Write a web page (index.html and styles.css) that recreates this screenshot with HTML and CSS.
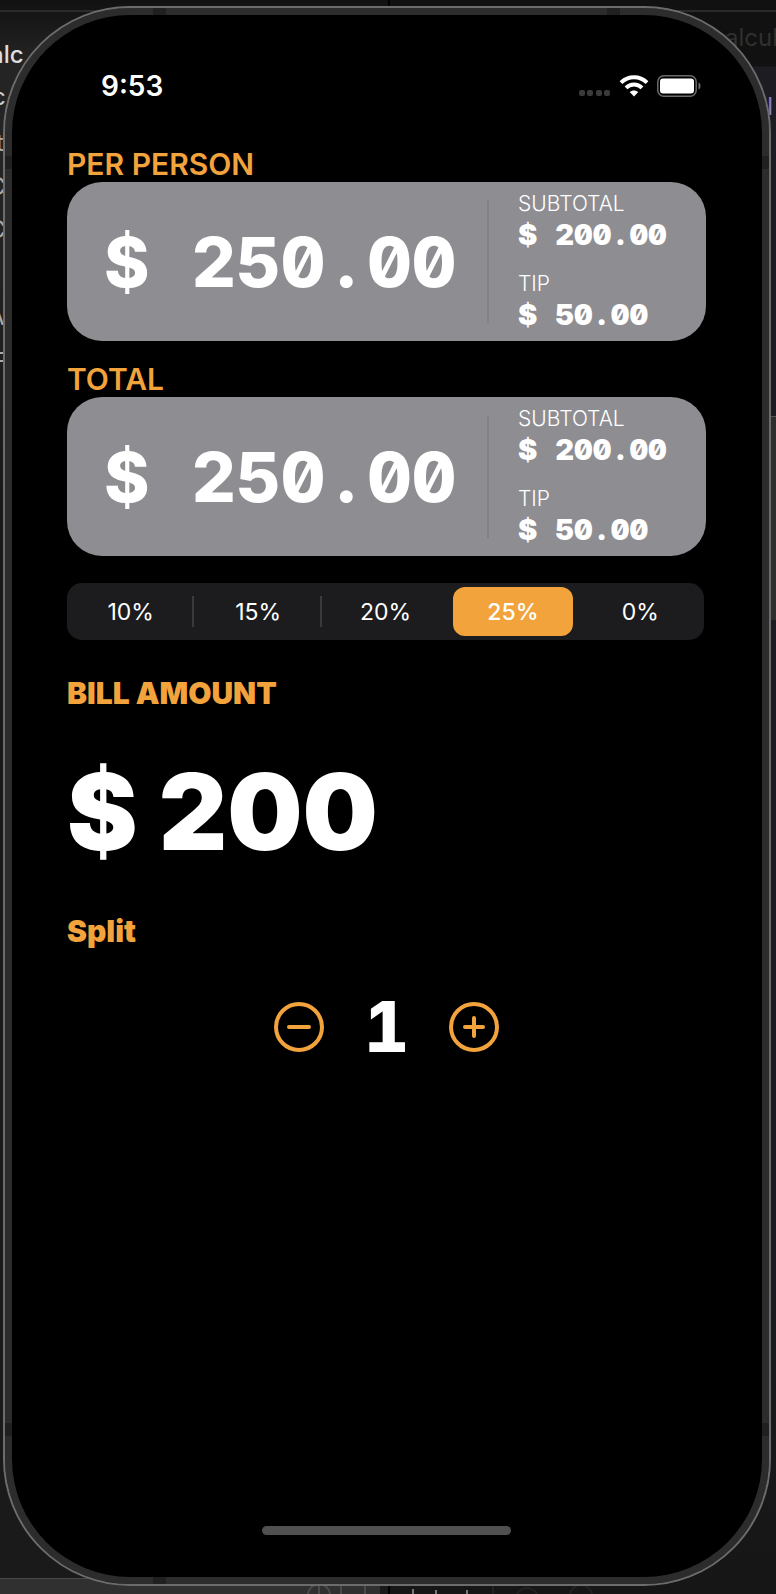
FILE: index.html
```html
<!DOCTYPE html>
<html lang="en">
<head>
<meta charset="utf-8">
<meta name="viewport" content="width=device-width, initial-scale=1">
<title>Tip Calculator</title>
<link rel="stylesheet" href="styles.css">
</head>
<body>
<div class="desktop" aria-hidden="true">
  <div class="pane pane-left"></div>
  <div class="pane pane-right"></div>
  <div class="pane pane-footer"></div>
  <div class="line line-top"></div>
  <div class="pane pane-side"></div>
  <span class="peek peek-title">alc</span>
  <span class="peek peek-tab">alcul</span>
  <span class="peek peek-a">c</span>
  <span class="peek peek-b">t</span>
  <span class="peek peek-c">C</span>
  <span class="peek peek-d">C</span>
  <span class="peek peek-e">A</span>
  <span class="peek peek-f">F</span>
  <span class="peek peek-code">l</span>
  <svg class="tools" viewBox="0 0 300 12" width="300" height="12" fill="none" stroke="#4a4a4a" stroke-width="2">
    <circle cx="19" cy="13" r="11"/><path d="M19 4v8M41 12V3h24v9"/>
    <path stroke="#000" d="M89 0v12"/><path stroke="#777" d="M113 7v5M136 8v4M167 8v4"/>
    <path stroke="#222" d="M193 3v9"/><circle stroke="#222" cx="227" cy="17" r="11"/><circle stroke="#222" cx="281" cy="14" r="11"/>
  </svg>
</div>
<div class="phone">
  <i class="band band-tl"></i><i class="band band-tr"></i><i class="band band-bl"></i>
  <i class="band side-tl"></i><i class="band side-tr"></i><i class="band side-bl"></i><i class="band side-br"></i>
  <header class="status">
    <time class="clock">9:53</time>
    <div class="indicators">
      <svg class="cell" width="32" height="22" viewBox="0 0 32 22" fill="#3a3a3a" aria-label="No signal">
        <rect x="0" y="15" width="6" height="6" rx="2"/><rect x="8" y="15" width="6" height="6" rx="2"/><rect x="17" y="15" width="6" height="6" rx="2"/><rect x="25" y="15" width="6" height="6" rx="2"/>
      </svg>
      <svg class="wifi" width="30" height="22" viewBox="0 0 30 22" fill="none" stroke="#fff" stroke-width="4" aria-label="Wi-Fi">
        <path d="M2 7.6C9.300 .4 20.700 .4 28 7.600"/><path d="M7 12.900C11.500 8.500 18.500 8.500 23 12.900"/>
        <path fill="#fff" stroke="none" d="M15 21.400l-4.300-4.300c2.400-2.300 6.200-2.300 8.600 0z"/>
      </svg>
      <svg class="battery" width="45" height="22" viewBox="0 0 45 22" fill="none" aria-label="Battery full">
        <rect x=".8" y=".8" width="38.400" height="20.400" rx="6" stroke="#6b6b6b" stroke-width="1.500"/>
        <rect x="3" y="3.500" width="34" height="15" rx="3" fill="#fff"/><path d="M41.500 7.500c2.700.6 2.700 6.400 0 7z" fill="#6b6b6b"/>
      </svg>
    </div>
  </header>
  <main class="calc">
    <section class="summary">
      <h2 class="label">PER PERSON</h2>
      <div class="card">
        <p class="money main-money">$<span class="slot"> </span>250<span class="slot">.</span>00</p>
        <div class="rule"></div>
        <dl class="details">
          <div><dt>SUBTOTAL</dt><dd class="money">$<span class="slot"> </span>200<span class="slot">.</span>00</dd></div>
          <div><dt>TIP</dt><dd class="money">$<span class="slot"> </span>50<span class="slot">.</span>00</dd></div>
        </dl>
      </div>
    </section>
    <section class="summary">
      <h2 class="label">TOTAL</h2>
      <div class="card">
        <p class="money main-money">$<span class="slot"> </span>250<span class="slot">.</span>00</p>
        <div class="rule"></div>
        <dl class="details">
          <div><dt>SUBTOTAL</dt><dd class="money">$<span class="slot"> </span>200<span class="slot">.</span>00</dd></div>
          <div><dt>TIP</dt><dd class="money">$<span class="slot"> </span>50<span class="slot">.</span>00</dd></div>
        </dl>
      </div>
    </section>
    <fieldset class="segments" aria-label="Tip percentage">
      <label class="segment"><input type="radio" name="tip"><span>10%</span></label>
      <label class="segment ruled"><input type="radio" name="tip"><span>15%</span></label>
      <label class="segment ruled"><input type="radio" name="tip"><span>20%</span></label>
      <label class="segment"><input type="radio" name="tip" checked><span>25%</span></label>
      <label class="segment"><input type="radio" name="tip"><span>0%</span></label>
    </fieldset>
    <label class="label heavy" for="bill">BILL AMOUNT</label>
    <input class="bill" id="bill" type="text" inputmode="decimal" value="$ 200">
    <h2 class="label heavy">Split</h2>
    <div class="stepper">
      <button class="step" type="button" aria-label="Fewer people">
        <svg width="50" height="50" viewBox="0 0 50 50" fill="none" stroke="currentColor" stroke-width="4" stroke-linecap="round"><circle cx="25" cy="25" r="23"/><path d="M15 25h20"/></svg>
      </button>
      <output class="count">1</output>
      <button class="step" type="button" aria-label="More people">
        <svg width="50" height="50" viewBox="0 0 50 50" fill="none" stroke="currentColor" stroke-width="4" stroke-linecap="round"><circle cx="25" cy="25" r="23"/><path d="M16 25h18M25 16v18"/></svg>
      </button>
    </div>
  </main>
  <div class="home-bar"></div>
</div>
</body>
</html>
```
FILE: styles.css
```css
* { box-sizing: border-box; margin: 0; padding: 0; }
body {
  min-height: 100vh;
  padding: 6px 5px 8px 3px;
  display: flex;
  background: #1b1b1b;
  color: #fff;
  font-family: Inter, "Liberation Sans", sans-serif;
  overflow: hidden;
}

/* windows behind the phone */
.desktop { position: absolute; inset: 0; overflow: hidden; background: #171717; }
.pane { position: absolute; }
.pane-left { left: 0; top: 0; bottom: 0; width: 50%; background: linear-gradient(#111, #242424 60px, #242424 200px, #191919 500px, #1a1a1a); }
.pane-right { right: 0; top: 0; bottom: 0; width: 50%; background: linear-gradient(#111 66px, #1d1c22 67px, #1b1a20 1300px, #161616); border-left: 2px solid #000; }
.pane-footer { left: 0; bottom: 0; width: 49%; height: 16px; background: #303030; border-top: 1px solid #484848; }
.pane-side { right: 0; top: 416px; width: 8px; height: 204px; background: #2e2e2e; border-top: 1px solid #555; }
.line { position: absolute; left: 0; right: 0; height: 2px; background: #2a2a2a; }
.line-top { top: 10px; }
.peek { position: absolute; left: -8px; font-size: 24px; line-height: 30px; color: #aaa; }
.peek-title { left: -10px; top: 40px; color: #ddd; font-weight: 500; }
.peek-tab { left: auto; right: -2px; top: 23px; color: #303030; }
.peek-a { top: 82px; color: #ccc; }
.peek-b { left: -4px; top: 128px; }
.peek-c { left: -12px; top: 172px; }
.peek-d { left: -12px; top: 215px; }
.peek-e { left: -12px; top: 302px; }
.peek-f { left: -8px; top: 347px; }
.peek-code { left: auto; right: 3px; top: 92px; color: #8f79c2; }
.tools { position: absolute; left: 300px; bottom: 0; }

.phone {
  position: relative;
  flex: 1;
  display: flex;
  flex-direction: column;
  align-items: center;
  padding: 53px 55px 49px 54px;
  border: 2px solid #6c6c6c;
  border-radius: 127px;
  background: #000;
  box-shadow: inset 0 0 0 7px #2c2c2c;
}
.band { position: absolute; width: 13px; height: 7px; background: #202020; }
.band-tl { top: 0; left: 148px; }
.band-tr { top: 0; right: 149px; }
.band-bl { bottom: 0; left: 148px; }
.side-tl, .side-tr, .side-bl, .side-br { width: 7px; height: 13px; }
.side-tl { top: 148px; left: 0; }
.side-tr { top: 148px; right: 0; }
.side-bl { bottom: 148px; left: 0; }
.side-br { bottom: 148px; right: 0; }

.status { align-self: stretch; display: flex; justify-content: space-between; align-items: center; height: 50px; padding: 0 12px 0 42px; }
.clock { font-size: 28px; font-weight: 600; }
.indicators { display: flex; align-items: center; gap: 8px; }

.calc { align-self: stretch; flex: 1; padding: 0 8px; margin: 35px 0 0; }
.summary { margin-bottom: 20px; }
.label { display: block; font-size: 30px; line-height: 36px; font-weight: 600; color: #f2a33c; }
.card { display: grid; grid-template-columns: 1fr 2px 217px; min-height: 159px; border-radius: 35px; background: #8e8d92; }
.money { font-variant-numeric: tabular-nums slashed-zero; font-weight: 900; white-space: pre; }
.main-money { align-self: center; padding-left: 37px; font-size: 69px; line-height: 80px; font-weight: 800; }
/* separators as wide as a digit */
.slot { display: inline-block; width: 42px; text-align: center; }
.details .slot { width: 18px; }
.rule { margin: 18px 0; background: #828286; }
.details { display: flex; flex-direction: column; gap: 18px; padding: 7px 0 0 29px; }
.details dt { font-size: 21px; line-height: 30px; font-weight: 300; }
.details dd { font-size: 29px; line-height: 32px; }

.segments { display: grid; grid-template-columns: repeat(5, 1fr); height: 57px; margin: 27px 2px 35px 0; border: 0; border-radius: 15px; background: #1c1c1e; }
.segment { position: relative; display: flex; padding: 4px; font-size: 23px; }
.segment input { position: absolute; inset: 0; opacity: 0; }
.segment span { flex: 1; display: flex; align-items: center; justify-content: center; border-radius: 12px; }
.segment input:checked + span { background: #f2a33c; font-weight: 500; }
.ruled::before { content: ""; position: absolute; left: -2px; top: 13px; bottom: 13px; width: 2px; background: #3a3a3c; }

.heavy { font-weight: 900; }
.bill { display: block; width: 100%; height: 130px; margin: 36px 0; border: 0; background: none; color: inherit; font: 900 106px/130px Inter, "Liberation Sans", sans-serif; }
.stepper { display: flex; justify-content: center; align-items: center; gap: 40px; margin-top: 36px; }
.step { display: flex; border: 0; background: none; color: #f2a33c; }
.count { min-width: 45px; text-align: center; font-size: 70px; line-height: 84px; font-weight: 800; font-variant-numeric: tabular-nums; }
.home-bar { width: 249px; height: 9px; border-radius: 5px; background: #505050; }
```
